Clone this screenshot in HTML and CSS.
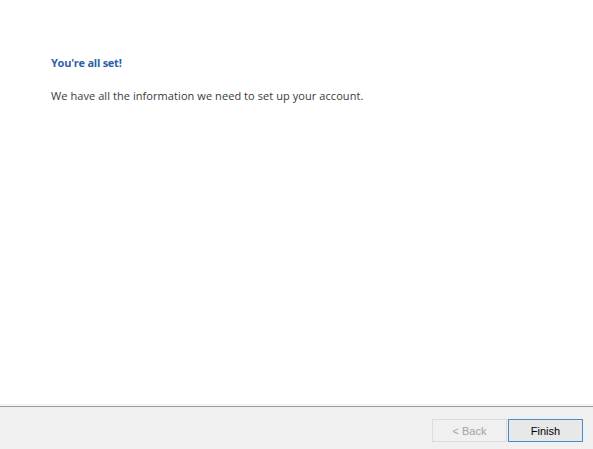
FILE: index.html
```html
<!DOCTYPE html>
<html>
<head>
<meta charset="utf-8">
<link rel="stylesheet" href="styles.css">
</head>
<body>
<div class="wizard">
  <main class="content">
    <h1 class="title">You're all set!</h1>
    <p class="message">We have all the information we need to set up your account.</p>
  </main>
  <footer class="footer">
    <button class="btn btn-disabled" disabled>&lt; Back</button>
    <button class="btn btn-default">Finish</button>
  </footer>
</div>
</body>
</html>
```

FILE: styles.css
```css
html, body {
  margin: 0;
  padding: 0;
  width: 593px;
  height: 449px;
  background: #ffffff;
  overflow: hidden;
}
.wizard {
  display: flex;
  flex-direction: column;
  height: 449px;
}
.content {
  flex: 1;
  padding: 55px 0 0 51px;
  font-family: "Open Sans", "Liberation Sans", sans-serif;
}
.title {
  margin: 0;
  font-size: 11px;
  font-weight: 700;
  color: #2f5fa9;
  line-height: 15px;
  letter-spacing: -0.25px;
}
.message {
  margin: 18px 0 0 0;
  font-size: 11px;
  color: #3a3a3a;
  line-height: 15px;
  letter-spacing: 0.07px;
}
.footer {
  height: 30px;
  border-top: 1px solid #a0a0a0;
  box-shadow: 0 -2px 0 #f4f4f4;
  background: #f0f0f0;
  display: flex;
  align-items: flex-start;
  justify-content: flex-end;
  padding: 12px 10px 0 0;
  gap: 1px;
  box-sizing: content-box;
  flex: none;
}
.btn {
  width: 75px;
  height: 23px;
  margin: 0;
  padding: 0;
  font-family: "Liberation Sans", Arial, sans-serif;
  font-size: 11px;
  box-sizing: border-box;
}
.btn-disabled {
  background: #f0f0f0;
  border: 1px solid #dcdcdc;
  color: #a3a3a3;
}
.btn-default {
  background: #e8e8e8;
  border: 1px solid #4a8bc9;
  color: #000000;
}
```
